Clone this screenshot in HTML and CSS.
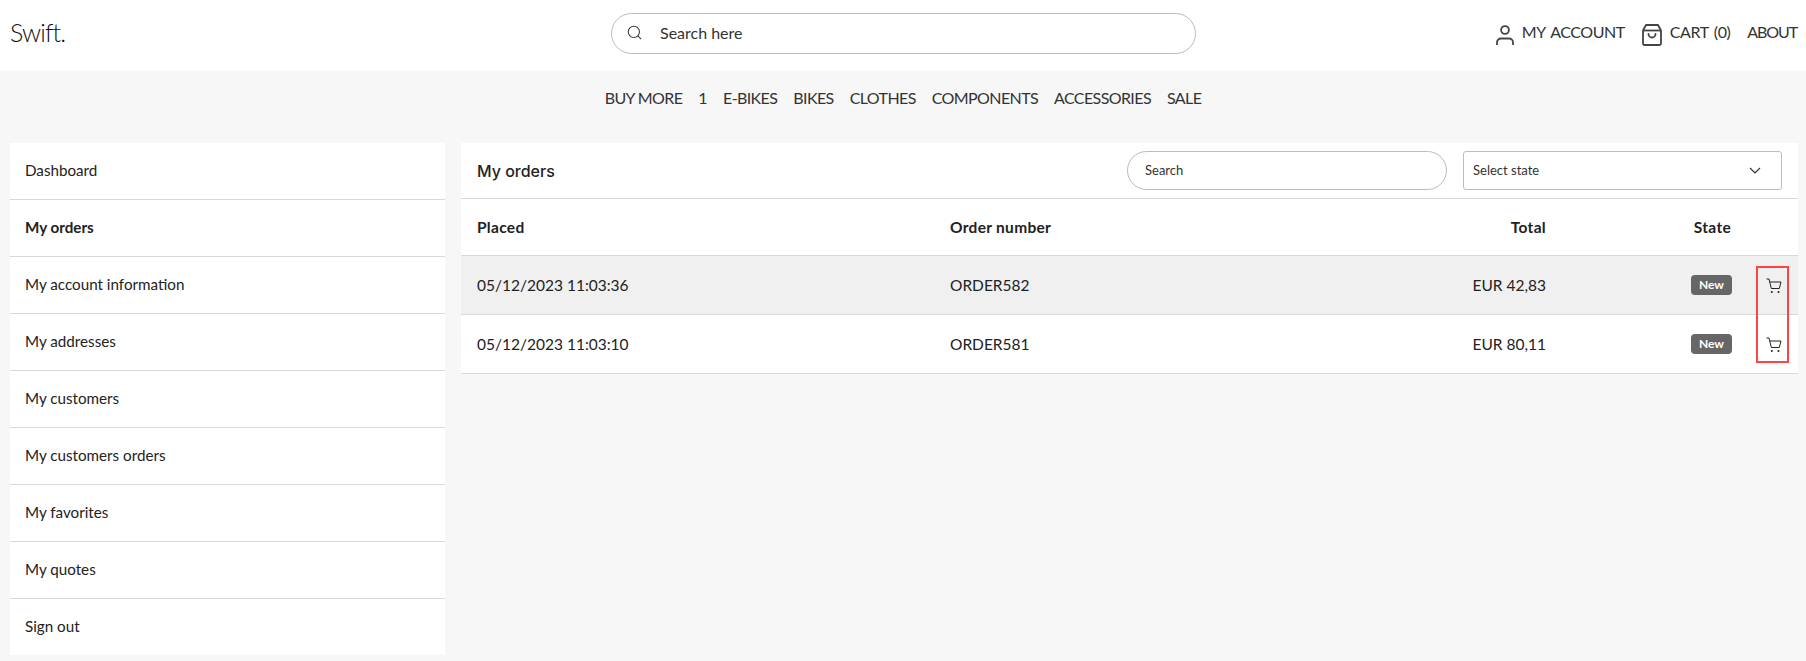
FILE: index.html
```html
<!DOCTYPE html>
<html lang="en">
<head>
<meta charset="utf-8">
<title>My orders</title>
<link rel="stylesheet" href="styles.css">
</head>
<body>
<header class="topbar">
  <div class="logo">Swift.</div>
  <div class="site-search">
    <svg class="site-search-icon" viewBox="0 0 16 16" fill="none" stroke="#333" stroke-width="1.1"><circle cx="7.3" cy="7.3" r="6"/><path d="M11.6 11.6 15 15"/></svg>
    <span>Search here</span>
  </div>
  <nav class="tools">
    <a class="tool"><svg class="icon-user" viewBox="0 0 18 20" fill="none" stroke="#444" stroke-width="1.8"><circle cx="9" cy="5" r="3.9"/><path d="M1 20v-2.500a4 4 0 0 1 4-4h8a4 4 0 0 1 4 4V20"/></svg>MY ACCOUNT</a>
    <a class="tool"><svg class="icon-bag" viewBox="0 0 20 22" fill="none" stroke="#444" stroke-width="1.8" stroke-linejoin="round"><path d="M1 6.500 4 1h12l3 5.500V19.500a1.500 1.500 0 0 1-1.500 1.500h-15A1.500 1.500 0 0 1 1 19.500z"/><path d="M1 6.500h18"/><path d="M6.500 10a3.500 3.500 0 0 0 7 0" stroke-linecap="round"/></svg>CART (0)</a>
    <a class="tool tool-about">ABOUT</a>
  </nav>
</header>
<nav class="mainnav">
  <a>BUY MORE</a><a>1</a><a>E-BIKES</a><a>BIKES</a><a>CLOTHES</a><a>COMPONENTS</a><a>ACCESSORIES</a><a>SALE</a>
</nav>
<main class="layout">
  <aside class="sidebar">
    <a class="side-item">Dashboard</a>
    <a class="side-item is-active">My orders</a>
    <a class="side-item">My account information</a>
    <a class="side-item">My addresses</a>
    <a class="side-item">My customers</a>
    <a class="side-item">My customers orders</a>
    <a class="side-item">My favorites</a>
    <a class="side-item">My quotes</a>
    <a class="side-item">Sign out</a>
  </aside>
  <section class="panel">
    <div class="panel-head">
      <h1 class="panel-title">My orders</h1>
      <div class="field field-search">Search</div>
      <div class="field field-select">Select state
        <svg class="chevron" viewBox="0 0 12 7" fill="none" stroke="#333" stroke-width="1.2"><path d="M1 1l5 5 5-5"/></svg>
      </div>
    </div>
    <div class="row row-head">
      <div>Placed</div><div>Order number</div><div class="right">Total</div><div class="right">State</div><div></div>
    </div>
    <div class="row row-hover">
      <div>05/12/2023 11:03:36</div><div>ORDER582</div><div class="right">EUR 42,83</div>
      <div class="right"><span class="badge">New</span></div>
      <div class="cart-cell"><svg class="cart" viewBox="0 0 16 16" fill="none" stroke="#222" stroke-width="1"><path d="M.5 1H3l2.300 9.500h8L15 4H3.800"/><circle cx="5.800" cy="14" r="1" fill="#222" stroke="none"/><circle cx="12.500" cy="14" r="1" fill="#222" stroke="none"/></svg></div>
    </div>
    <div class="row">
      <div>05/12/2023 11:03:10</div><div>ORDER581</div><div class="right">EUR 80,11</div>
      <div class="right"><span class="badge">New</span></div>
      <div class="cart-cell"><svg class="cart" viewBox="0 0 16 16" fill="none" stroke="#222" stroke-width="1"><path d="M.5 1H3l2.300 9.500h8L15 4H3.800"/><circle cx="5.800" cy="14" r="1" fill="#222" stroke="none"/><circle cx="12.500" cy="14" r="1" fill="#222" stroke="none"/></svg></div>
    </div>
    <div class="highlight"></div>
  </section>
</main>
</body>
</html>
```
FILE: styles.css
```css
* { box-sizing: border-box; }
html, body { margin: 0; }
body {
  background: #f7f7f7;
  color: #222;
  font-family: Lato, "Liberation Sans", sans-serif;
  font-size: 15px;
  height: 661px;
  overflow: hidden;
}
.topbar {
  height: 71px;
  background: #fff;
  display: grid;
  grid-template-columns: 601px 585px 1fr;
  align-items: center;
  padding: 0 9px 0 10px;
}
.logo {
  font-size: 25px;
  font-weight: 300;
  letter-spacing: -0.9px;
  color: #111;
  padding-bottom: 7px;
}
.site-search {
  height: 41px;
  margin-top: -4px;
  border: 1px solid #bbb;
  border-radius: 21px;
  display: flex;
  align-items: center;
  padding: 0 0 2px 15px;
  gap: 18px;
  font-size: 16px;
  color: #333;
}
.site-search-icon { width: 15px; height: 15px; }
.tools {
  display: flex;
  justify-content: flex-end;
  align-items: center;
  gap: 17px;
  padding-bottom: 8px;
  font-size: 16px;
  letter-spacing: -0.45px;
  word-spacing: 2px;
  color: #333;
}
.tool { display: flex; align-items: center; gap: 8px; }
.tool-about { letter-spacing: -1.1px; }
.icon-user { width: 18px; height: 20px; margin-top: 7px; }
.icon-bag { width: 20px; height: 22px; margin-top: 7px; }
.mainnav {
  height: 54px;
  display: flex;
  justify-content: center;
  align-items: center;
  gap: 16px;
  padding-bottom: 1px;
  font-size: 16px;
  letter-spacing: -0.6px;
  color: #333;
}
.layout {
  margin-top: 18px;
  padding: 0 8px 0 10px;
  display: grid;
  grid-template-columns: 435px 1fr;
  gap: 16px;
  align-items: start;
}
.sidebar { background: #fff; }
.side-item {
  display: flex;
  align-items: center;
  height: 57px;
  padding: 0 0 2px 15px;
  border-bottom: 1px solid #d9d9d9;
  font-size: 15.2px;
}
.side-item:last-child { height: 56px; border-bottom: 0; }
.side-item.is-active { font-weight: 700; }
.panel { position: relative; background: #fff; }
.panel-head {
  height: 56px;
  display: flex;
  align-items: center;
  padding: 0 16px;
  border-bottom: 1px solid #d9d9d9;
}
.panel-title {
  margin: 0 auto 0 0;
  font: 500 16px Inter, "Liberation Sans", sans-serif;
  color: #222;
}
.field {
  height: 39px;
  display: flex;
  align-items: center;
  border: 1px solid #bbb;
  font-size: 13px;
  color: #333;
}
.field-search { width: 320px; border-radius: 20px; padding: 0 0 1px 17px; }
.field-select {
  width: 319px;
  margin-left: 16px;
  border-radius: 3px;
  padding: 0 20px 1px 9px;
  justify-content: space-between;
}
.chevron { width: 12px; height: 7px; }
.row {
  display: grid;
  grid-template-columns: 473px 400px 196px 185px 51px;
  align-items: center;
  height: 59px;
  padding: 0 16px;
  border-bottom: 1px solid #d9d9d9;
  font-size: 15.5px;
}
.row-head { height: 57px; font-weight: 700; letter-spacing: 0.3px; padding-bottom: 1px; }
.row-hover { background: #f0f0f0; }
.right { text-align: right; }
.badge {
  display: block;
  width: 41px;
  height: 20px;
  margin: 0 -1px 0 auto;
  line-height: 20px;
  text-align: center;
  background: #666;
  border-radius: 4px;
  color: #fff;
  font-size: 12px;
  font-weight: 700;
}
.cart-cell { display: flex; justify-content: flex-end; padding-top: 1px; }
.cart { width: 16px; height: 16px; }
.highlight {
  position: absolute;
  top: 123px;
  right: 9px;
  width: 33px;
  height: 97px;
  border: 2px solid #f44;
}
```
